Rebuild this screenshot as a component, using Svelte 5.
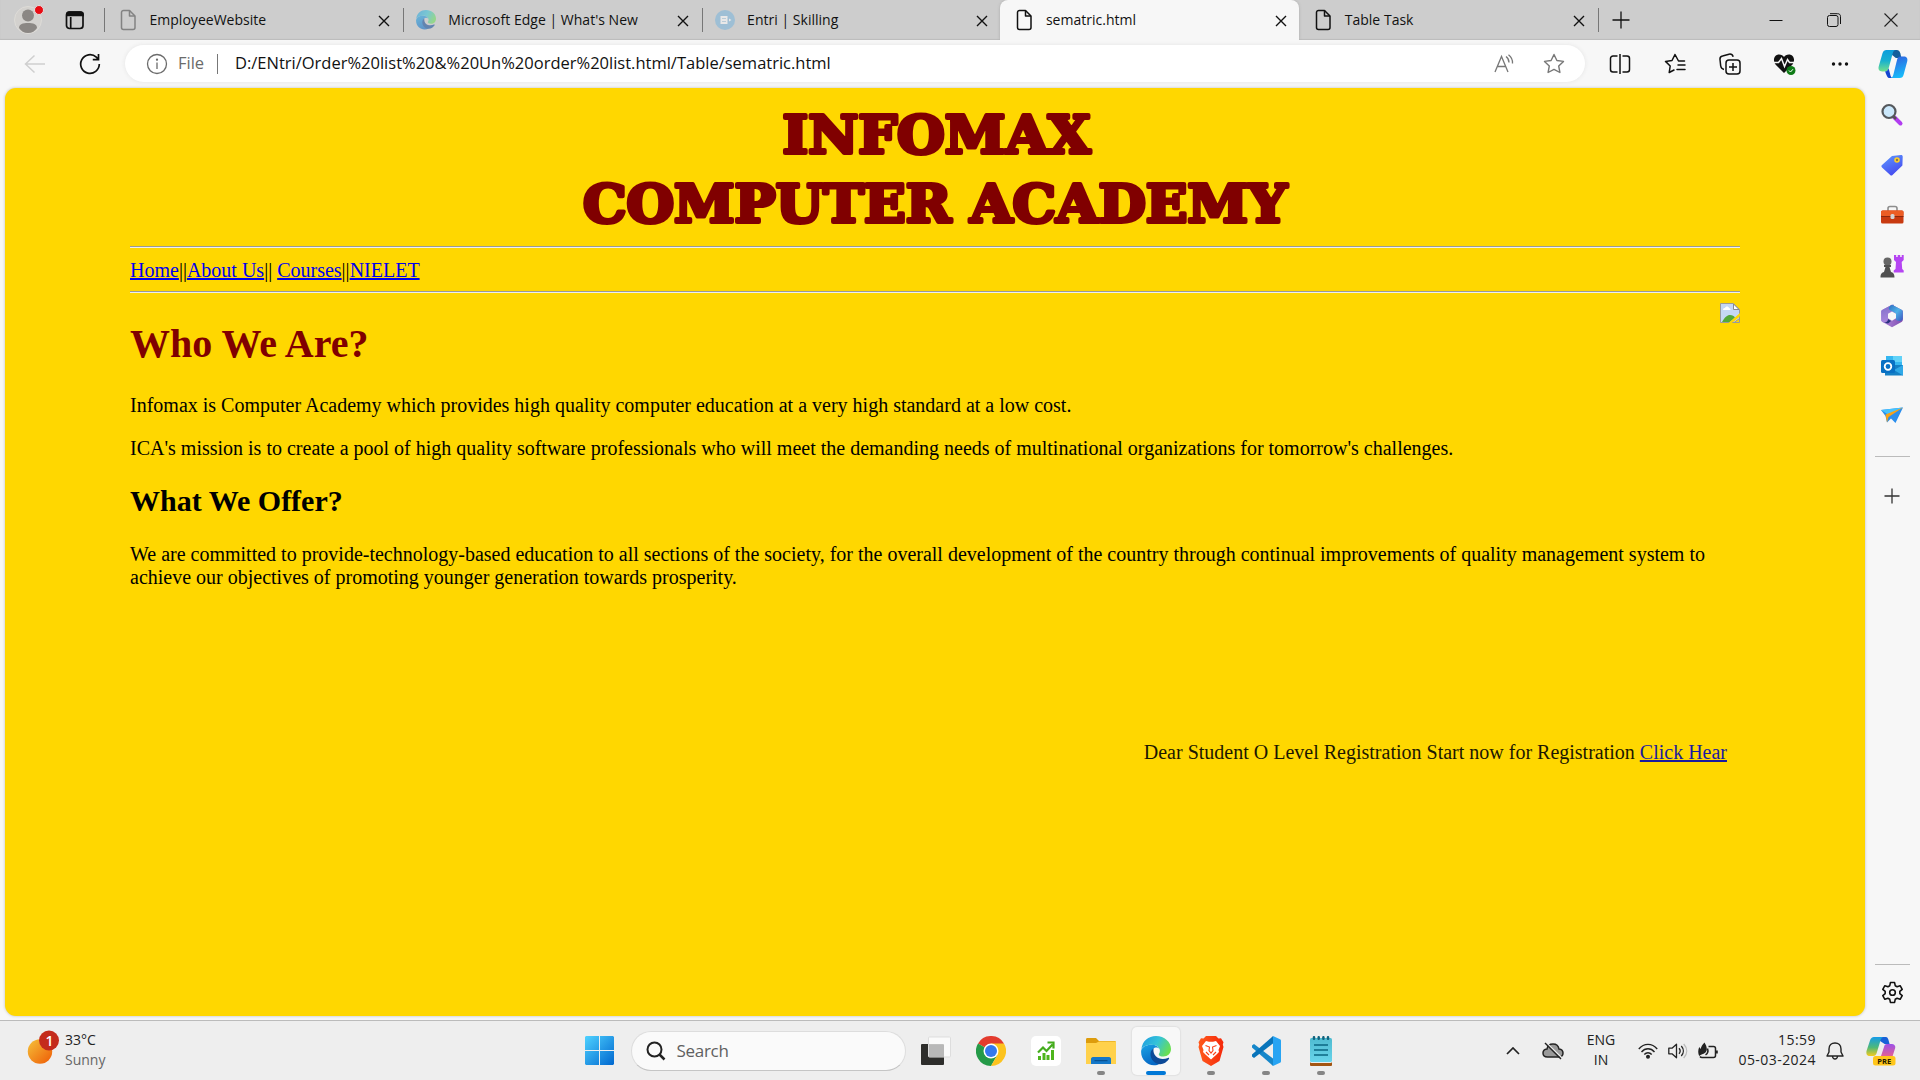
<script>
  const tabs = [
    { title: 'EmployeeWebsite', icon: 'doc', muted: true },
    { title: "Microsoft Edge | What's New", icon: 'edge', muted: true },
    { title: 'Entri | Skilling', icon: 'entri', muted: true },
    { title: 'sematric.html', icon: 'doc', active: true },
    { title: 'Table Task', icon: 'doc' }
  ];
  const sidebar = ['search', 'tag', 'toolbox', 'chess', 'm365', 'outlook', 'plane'];
  const apps = [
    { icon: 'taskview' },
    { icon: 'chrome' },
    { icon: 'stock' },
    { icon: 'folder', open: true },
    { icon: 'edge', open: true, current: true },
    { icon: 'brave', open: true },
    { icon: 'vscode', open: true },
    { icon: 'notepad', open: true }
  ];
</script>

{#snippet edgeLogo(size)}
  <svg width={size} height={size} viewBox="0 0 30 30">
    <defs>
      <linearGradient id="edgeTop" x1="0" y1="0.2" x2="1" y2="0.6">
        <stop offset="0" stop-color="#1f9fe0" /><stop offset="0.5" stop-color="#35c3d8" /><stop offset="1" stop-color="#6be04e" />
      </linearGradient>
      <linearGradient id="edgeLeft" x1="0" y1="0" x2="0.4" y2="1">
        <stop offset="0" stop-color="#1aa3e4" /><stop offset="1" stop-color="#0669c6" />
      </linearGradient>
    </defs>
    <path d="M0.4 13C1.400 5 7.500 0 15 0c8.500 0 15 6 15 13 0 4.500-3.300 7.500-7.600 7.500-3 0-4.600-1-4.600-2.100 0-.9 1.100-1.400 1.100-3.700 0-3.200-3.300-6-8.200-6C5.700 8.700 2 10.500.4 13z" fill="url(#edgeTop)" />
    <path d="M0.200 14.500C1 10.800 5.500 8.500 10.700 8.700c4 .1 6.600 1.900 7.600 3.900-1.500-1.300-4.400-1.700-6 .3-3.500 4.200-.4 12.500 7 14.500C10 33-1 25 .2 14.500z" fill="url(#edgeLeft)" />
    <path d="M12.500 12.600C8 15 8.300 23.500 15 27.300c5.500 2.500 10.500-.6 12.900-4.300.6-1-.2-1.500-1-1.100-6.500 3.100-15.500-.1-14.400-9.300z" fill="#0c4a98" />
  </svg>
{/snippet}

{#snippet docIcon(color)}
  <svg width="17" height="22" viewBox="0 0 17 22" fill="none" stroke={color} stroke-width="1.500" stroke-linejoin="round">
    <path d="M3.500 1.500h6l5.500 5.500v11.500a2 2 0 0 1-2 2h-9.500a2 2 0 0 1-2-2V3.500a2 2 0 0 1 2-2z" /><path d="M9.500 1.500V7H15" />
  </svg>
{/snippet}

{#snippet copilot(size)}
  <svg width={size} height={size} viewBox="0 0 32 32">
    <defs>
      <linearGradient id="cpA" x1="0" y1="0" x2="0" y2="1"><stop offset="0" stop-color="#0b9ddc" /><stop offset="0.5" stop-color="#18b0d0" /><stop offset="1" stop-color="#72e08c" /></linearGradient>
      <linearGradient id="cpB" x1="0.300" y1="0" x2="0.600" y2="1"><stop offset="0" stop-color="#2f62e0" /><stop offset="1" stop-color="#16c0fb" /></linearGradient>
    </defs>
    <path d="M8.500 1H20c2.300 0 3.200 1.500 3.800 3.500L25 9.500h-6z" fill="#135f9c" />
    <path d="M9 1h10c-2 0-2.700 1.500-3.300 3.500L11.500 20c-.7 2.500-1.500 4-3.700 4H4.500C1 24 0 21.500.8 18.500L4.800 4.500C5.600 2 7 1 9 1z" fill="url(#cpA)" />
    <path d="M7.500 24c2.200 0 3.200-1.500 3.800-3.500L13 27c.5 2.500 1.200 4 3 4h-3.500c-3 0-3.500-4-5-7z" fill="#1446d0" />
    <path d="M27.500 8H24c-2 0-3 1.200-3.600 3.200L16.500 27c-.6 2.500-1.400 4-3.400 4H23c2.500 0 3.700-1.200 4.300-3.500L31.200 13c.8-3-.8-5-3.700-5z" fill="url(#cpB)" />
  </svg>
{/snippet}

<div class="screen">
  <header class="tabbar">
    <div class="profile">
      <svg width="34" height="36" viewBox="0 0 34 36">
        <circle cx="15" cy="19" r="13.500" fill="#d3d1ce" stroke="#dedcd8" />
        <circle cx="15" cy="14.500" r="6" fill="#8b8784" />
        <path d="M6 27c0-4 4-5 9-5s9 1 9 5c-2 3-5 5-9 5s-7-2-9-5z" fill="#8b8784" />
        <circle cx="26" cy="9" r="4.500" fill="#e80c14" stroke="#e4dede" />
      </svg>
    </div>
    <div class="workspace">
      <svg width="20" height="20" viewBox="0 0 20 20" fill="none" stroke="#111" stroke-width="1.700"><rect x="1.500" y="2" width="16.500" height="16.500" rx="3" /><path d="M2 5.500V4c0-1.500 1-2 2-2h11.500c1.500 0 2.500.5 2.500 2v1.500z" fill="#111" /><path d="M5.700 7v11" /></svg>
    </div>
    {#each tabs as tab}
      <div class="tab" class:active={tab.active}>
        <span class="favicon" class:faded={tab.muted} class:logo={tab.icon !== 'doc'}>
          {#if tab.icon === 'doc'}
            {@render docIcon(tab.muted ? '#555' : '#111')}
          {:else if tab.icon === 'edge'}
            {@render edgeLogo(20)}
          {:else}
            <svg width="20" height="20" viewBox="0 0 20 20"><circle cx="10" cy="10" r="10" fill="#78b4dc" /><path d="M5.500 6h7v8h-7z" fill="#fff" /><path d="M7 8.500h4M7 11.500h4" stroke="#a8cbe0" /><path d="M14 8.500l2.500 1.500-2.500 1.500z" fill="#fff" /></svg>
          {/if}
        </span>
        <span class="title">{tab.title}</span>
        <svg class="close" width="12" height="12" viewBox="0 0 12 12" stroke="#111" stroke-width="1.400"><path d="M1 1l10 10M11 1L1 11" /></svg>
      </div>
    {/each}
    <div class="newtab"><svg width="18" height="18" viewBox="0 0 18 18" stroke="#111" stroke-width="1.300"><path d="M9 .5v17M.5 9h17" /></svg></div>
    <div class="window-buttons">
      <svg width="14" height="14" viewBox="0 0 14 14" stroke="#111"><path d="M.5 7.500h13" /></svg>
      <svg width="14" height="14" viewBox="0 0 14 14" fill="none" stroke="#111"><rect x=".5" y="2.500" width="10.500" height="11" rx="2" /><path d="M3 .7h7.500c2 0 3 1 3 3V11" /></svg>
      <svg width="14" height="14" viewBox="0 0 14 14" stroke="#222" stroke-width="1.100"><path d="M.5.5l13 13M13.500.5l-13 13" /></svg>
    </div>
  </header>

  <div class="toolbar">
    <div class="tool"><svg width="22" height="20" viewBox="0 0 22 20" fill="none" stroke="#cfcfcf" stroke-width="1.500"><path d="M21 10H1.500M10.500 1.500L1.500 10l9 8.500" /></svg></div>
    <div class="tool"><svg width="22" height="22" viewBox="0 0 22 22" fill="none" stroke="#111" stroke-width="1.700"><path d="M20.300 11a9.300 9.300 0 1 1-3-6.800L19.500 6.500M19.500 1v5.700h-5.700" /></svg></div>
    <div class="address">
      <svg class="info" width="22" height="22" viewBox="0 0 22 22" fill="none" stroke="#6b6b6b" stroke-width="1.300"><circle cx="11" cy="11" r="9.500" /><path d="M11 9.500V16" /><circle cx="11" cy="6.700" r=".5" fill="#6b6b6b" /></svg>
      <span class="scheme">File</span>
      <span class="divider"></span>
      <span class="url">D:/ENtri/Order%20list%20&amp;%20Un%20order%20list.html/Table/sematric.html</span>
      <svg class="read" width="22" height="20" viewBox="0 0 22 20" fill="none" stroke="#777" stroke-width="1.300"><path d="M1 18L7.500 2.500 14 18M3.500 12.500h8M12 2.500c2 1.500 3 3.500 3 6M14.500.7c3 2.300 4.300 5.300 4 8.800" /></svg>
      <svg class="star" width="22" height="22" viewBox="0 0 22 22" fill="none" stroke="#777" stroke-width="1.400" stroke-linejoin="round"><path d="M11 1.500l2.900 6 6.600.9-4.800 4.600 1.200 6.500-5.900-3.100-5.900 3.100L6.300 13 1.500 8.400l6.600-.9z" /></svg>
    </div>
    <div class="actions">
      <div class="tool"><svg width="22" height="22" viewBox="0 0 22 22" fill="none" stroke="#111" stroke-width="1.500"><path d="M8.500 3H4a2.500 2.500 0 0 0-2.500 2.500v11A2.500 2.500 0 0 0 4 19h4.500M13.500 3H18a2.500 2.500 0 0 1 2.500 2.500v11A2.500 2.500 0 0 1 18 19h-4.500M11 1v20" /></svg></div>
      <div class="tool"><svg width="22" height="22" viewBox="0 0 22 22" fill="none" stroke="#111" stroke-width="1.500" stroke-linejoin="round" stroke-linecap="round"><path d="M20 8h-5.500L11 1.500 8 7.500l-6.500.9L6.200 13l-1 6.500L10 17M14 12h7M13 16.500h8M15 8h5.500" /></svg></div>
      <div class="tool"><svg width="22" height="22" viewBox="0 0 22 22" fill="none" stroke="#111" stroke-width="1.500" stroke-linejoin="round"><rect x="7" y="7" width="14" height="14" rx="3" /><path d="M14 10v8M10 14h8M5 16.500c-2-.5-3-1.500-3.300-3.500L1 6.500c-.2-2 .7-3.200 2.500-3.600L10 1.200c2-.4 3.500.5 4.200 2.500" /></svg></div>
      <div class="tool"><svg width="24" height="24" viewBox="0 0 24 24"><path d="M11 21L2.500 12.500C-1 7 2 2.500 6 2.500c2.500 0 4 1 5 2.500 1-1.500 2.500-2.500 5-2.500 4 0 7 4.500 3.500 10z" fill="#111" /><path d="M1 10.500h4.500l3-4 3 8 3-7 2 3H21" fill="none" stroke="#f7f7f7" stroke-width="1.500" /><circle cx="18" cy="18.500" r="4.500" fill="#0f7b16" /><path d="M16 18.500l1.500 1.500 2.500-2.800" fill="none" stroke="#fff" /></svg></div>
      <div class="tool"><svg width="18" height="6" viewBox="0 0 18 6" fill="#111"><circle cx="2.500" cy="3" r="1.700" /><circle cx="9" cy="3" r="1.700" /><circle cx="15.500" cy="3" r="1.700" /></svg></div>
      <div class="tool last">{@render copilot(30)}</div>
    </div>
  </div>

  <div class="body">
    <main class="page">
      <div class="content">
        <h1 class="banner">
          <svg width="740" height="150" viewBox="0 0 740 150">
            <text x="217.500" y="57" textLength="308" lengthAdjust="spacingAndGlyphs">INFOMAX</text>
            <text x="18" y="126" textLength="704" lengthAdjust="spacingAndGlyphs">COMPUTER ACADEMY</text>
          </svg>
        </h1>
        <hr />
        <nav><a href="#home">Home</a>||<a href="#about">About Us</a>|| <a href="#courses">Courses</a>||<a href="#nielet">NIELET</a></nav>
        <hr />
        <div class="intro">
          <h2 class="who">Who We Are?</h2>
          <svg class="broken" width="20" height="20" viewBox="0 0 20 20">
            <path d="M.5.5h13l6 6v9L14 19.500H.5z" fill="#c6d8f5" stroke="#9a9a9a" />
            <path d="M13.500 1v5.500H19z" fill="#fff" stroke="#8a8a8a" />
            <path d="M3 7c0-2 1.500-2 2-2 .5-2 3.500-2 4 0 1 0 1.500 1 1.500 2z" fill="#fff" />
            <path d="M2 19c3-5 5-7 8-7 2.500 0 4 1 5 2.500L10 19z" fill="#54a838" />
            <path d="M20 10L8.500 20H12l8-6.500z" fill="#ffd700" />
            <path d="M12.500 19.500h7v-6" fill="none" stroke="#9a9a9a" />
          </svg>
        </div>
        <p>Infomax is Computer Academy which provides high quality computer education at a very high standard at a low cost.</p>
        <p>ICA's mission is to create a pool of high quality software professionals who will meet the demanding needs of multinational organizations for tomorrow's challenges.</p>
        <h3>What We Offer?</h3>
        <p>We are committed to provide-technology-based education to all sections of the society, for the overall development of the country through continual improvements of quality management system to achieve our objectives of promoting younger generation towards prosperity.</p>
        <div class="notice">Dear Student O Level Registration Start now for Registration <a href="#register">Click Hear</a></div>
      </div>
    </main>

    <aside class="sidebar">
      {#each sidebar as item}
        <div class="side">
          <svg width="24" height="24" viewBox="0 0 24 24">
            {#if item === 'search'}
              <path d="M14 14l6.500 6.500" stroke="#b13df0" stroke-width="4" stroke-linecap="round" /><path d="M13 13l3 3" stroke="#555" stroke-width="2.500" />
              <circle cx="9" cy="8.500" r="6.500" fill="#cbe8fb" stroke="#55585c" stroke-width="2.200" />
            {:else if item === 'tag'}
              <defs><linearGradient id="tagG" x1="0" y1="0" x2=".5" y2="1"><stop offset="0" stop-color="#5e9bff" /><stop offset="1" stop-color="#464cf0" /></linearGradient></defs>
              <path d="M12 3l9-1c1.200 0 1.700.7 1.700 1.700l-.3 8.800L12.500 22c-.8.7-1.600.7-2.300 0L2 14.500c-.8-.8-.8-1.600 0-2.400z" fill="url(#tagG)" /><circle cx="17" cy="7" r="2" fill="#8a7a50" stroke="#ffcf29" stroke-width="1.600" />
            {:else if item === 'toolbox'}
              <path d="M8 8V5.500C8 4 9 3.500 10 3.500h5c1.500 0 2 .8 2 2V8" fill="none" stroke="#8d8d8d" stroke-width="1.600" />
              <rect x="1" y="7.500" width="22.500" height="13" rx="1.500" fill="#c83a10" /><rect x="1" y="7.500" width="22.500" height="5.500" rx="1.500" fill="#ec5d24" /><path d="M1 13.500h22.500" stroke="#8d280e" /><rect x="10.500" y="11" width="4" height="5" rx="1.500" fill="#d4d4d4" />
            {:else if item === 'chess'}
              <path d="M14 1h2.200v2h1.500V1h2.500v2h1.500V1h2v5l-2 2 .5 7 1.500 1.500v2h-10v-2L15.500 15 16 8l-2-2z" fill="#b545f2" />
              <circle cx="7.500" cy="7.500" r="4" fill="#666" /><path d="M4 11h7v2H9.500l1.500 5c2 .5 3.500 1.500 3.500 5.500H.5C.5 19.500 2 18.500 4 18l1.500-5H4z" fill="#505050" />
            {:else if item === 'm365'}
              <defs>
                <linearGradient id="mTop" x1="0" y1="0" x2="1" y2="1"><stop offset="0" stop-color="#2a6ec0" /><stop offset=".5" stop-color="#4fb2e8" /><stop offset="1" stop-color="#3a55c0" /></linearGradient>
                <linearGradient id="mLeft" x1="0" y1="0" x2=".3" y2="1"><stop offset="0" stop-color="#7d6ec8" /><stop offset="1" stop-color="#a986dc" /></linearGradient>
                <linearGradient id="mBase" x1="0" y1="0" x2="1" y2="0"><stop offset="0" stop-color="#b48be0" /><stop offset="1" stop-color="#7e4cae" /></linearGradient>
              </defs>
              <path d="M12 .8l9.500 5c.9.500 1.300 1 1.300 2v8c0 1-.4 1.600-1.300 2.100L12 23.300l-9.500-5.400c-.9-.5-1.300-1.100-1.300-2.100v-8c0-1 .4-1.500 1.300-2z" fill="url(#mBase)" />
              <path d="M12 .8L2.500 5.800c-.9.500-1.300 1-1.300 2v8c0 1 .4 1.600 1.300 2.100l1 .6L8 15.500V9.500L14 6V.8z" fill="url(#mLeft)" />
              <path d="M8 19.500l-4.500-1c2.700.5 4.500-1 4.500-3.500l3 2z" fill="#28337e" />
              <path d="M12 .8l9.500 5c.9.500 1.300 1 1.300 2v7c-.5 2.200-3 3-6.800 1.200V9.500l-5-2.800C7.800 5.500 8 3 12 .8z" fill="url(#mTop)" />
              <path d="M12 7.500l4 2.300v4.500L12 16.700l-4-2.400V9.800z" fill="#f7f7f7" />
            {:else if item === 'outlook'}
              <path d="M6 2h16v17H6z" fill="#35b7f1" /><path d="M13 2h9v6h-9z" fill="#61d2f8" /><path d="M5 11h18v10.500H5z" fill="#1580c5" /><path d="M14 16l9-5v10.500z" fill="#30a9e8" /><rect x="1" y="6" width="14" height="13" rx="1.500" fill="#0870c4" /><circle cx="8" cy="12.500" r="3.300" fill="none" stroke="#fff" stroke-width="1.800" />
            {:else}
              <path d="M1 6l22-2.500L15.500 19 11 14.500 7 18.500 5.500 12z" fill="#2a8eed" /><path d="M1 6l22-2.500-15 7z" fill="#45c3ff" /><path d="M5.500 10.500L23 3.500 8.500 13 7 18.500z" fill="#f7a218" />
            {/if}
          </svg>
        </div>
      {/each}
      <div class="rule"></div>
      <div class="side add"><svg width="16" height="16" viewBox="0 0 16 16" stroke="#333" stroke-width="1.300"><path d="M8 .5v15M.5 8h15" /></svg></div>
      <div class="rule bottom"></div>
      <div class="side gear"><svg width="23" height="23" viewBox="0 0 22 22" fill="none" stroke="#111" stroke-width="1.500" stroke-linejoin="round"><path d="M9 1.500h4l.6 3 1.800 1 2.900-1 2 3.500-2.300 2v2l2.300 2-2 3.500-2.900-1-1.800 1-.6 3H9l-.6-3-1.800-1-2.900 1-2-3.500 2.300-2v-2l-2.300-2 2-3.500 2.900 1 1.800-1z" /><circle cx="11" cy="11" r="2.700" /></svg></div>
    </aside>
  </div>

  <footer class="taskbar">
    <div class="weather">
      <svg width="34" height="36" viewBox="0 0 34 36">
        <defs><linearGradient id="sunG" x1="0" y1="0" x2="1" y2="1"><stop offset="0" stop-color="#f5c23a" /><stop offset="1" stop-color="#ee5a05" /></linearGradient></defs>
        <circle cx="13" cy="22.500" r="12.200" fill="url(#sunG)" /><circle cx="22" cy="11.500" r="10" fill="#c42b1c" /><text x="22.500" y="16.500" class="badge">1</text>
      </svg>
      <div class="stack"><span>33°C</span><span class="dim">Sunny</span></div>
    </div>
    <div class="start">
      <svg width="29" height="29" viewBox="0 0 29 29">
        <defs><linearGradient id="winG" gradientUnits="userSpaceOnUse" x1="0" y1="0" x2="29" y2="29"><stop offset="0" stop-color="#4fd2ff" /><stop offset="1" stop-color="#0067cf" /></linearGradient></defs>
        <path d="M1 0h13v14H0V1zM15 0h13l1 1v13H15zM0 15h14v14H1l-1-1zM15 15h14v13l-1 1H15z" fill="url(#winG)" />
      </svg>
    </div>
    <div class="search">
      <svg width="20" height="20" viewBox="0 0 20 20" fill="none" stroke="#222" stroke-width="2"><circle cx="8.500" cy="8.500" r="7" /><path d="M13.500 13.500l5 5" stroke-width="2.500" /></svg>
      <span>Search</span>
    </div>
    <div class="apps">
      {#each apps as app}
        <div class="app" class:current={app.current}>
          {#if app.icon === 'taskview'}
            <svg width="30" height="30" viewBox="0 0 30 30"><rect x="0" y="8" width="23" height="21" rx="1" fill="#2d2d2b" /><rect x="7.500" y="1" width="22" height="20" rx="1" fill="#fff" fill-opacity=".7" stroke="#ddd" /><path d="M8 9h15v12H8z" fill="#b8b8b8" /></svg>
          {:else if app.icon === 'chrome'}
            <svg width="30" height="30" viewBox="0 0 30 30"><path d="M15 15L2 7.500a15 15 0 0 1 26 0z" fill="#e33b2e" /><path d="M15 15L2 7.500A15 15 0 0 0 15 30l6.500-11.300z" fill="#249a48" /><path d="M15 7.500h13A15 15 0 0 1 15 30l6.500-11.300z" fill="#fcc31e" /><circle cx="15" cy="15" r="7.500" fill="#fff" /><circle cx="15" cy="15" r="6" fill="#3478ee" /></svg>
          {:else if app.icon === 'stock'}
            <svg width="30" height="30" viewBox="0 0 30 30"><rect width="30" height="30" rx="5" fill="#fff" /><path d="M8.500 24v-4M13 24v-7M17 24v-5M21.500 24V14" stroke="#4eb51d" stroke-width="3" /><path d="M7 16.500l5-5 3.500 3.500 6-6.500M16.500 6.500h6v6" fill="none" stroke="#43ac1c" stroke-width="2.200" /></svg>
          {:else if app.icon === 'folder'}
            <svg width="30" height="30" viewBox="0 0 30 30"><path d="M0 3.500C0 2.500.5 2 1.500 2H10l3 3h15.500c1 0 1.500.5 1.500 1.500V10H0z" fill="#dd9c0c" /><path d="M0 7h10l3-1.500h17V28H0z" fill="#ffd14b" /><path d="M5 28v-5c0-1 .7-2 2-2h16c1.300 0 2 1 2 2v5z" fill="#1477c8" /><path d="M8.500 24.700h13" stroke="#074984" /></svg>
          {:else if app.icon === 'edge'}
            {@render edgeLogo(30)}
          {:else if app.icon === 'brave'}
            <svg width="26" height="30" viewBox="0 0 26 30"><defs><linearGradient id="braveG"><stop offset="0" stop-color="#ff5a1c" /><stop offset="1" stop-color="#f5290b" /></linearGradient></defs><path d="M8 0h10l2.500 2.500L23 2.300l2.500 4-.7 2.200.7 2.500-4 14L13 30l-8.500-5-4-14 .7-2.500L.5 6.300 3 2.300l2.500.2z" fill="url(#braveG)" /><path d="M8 5l3 .8h4l3-.8 4 5-1.500 4 .5 2-3 3-5 4.500L8 19l-3-3 .5-2L4 10z" fill="#fff" /><path d="M7.500 9.500l4 1.500-.5 3.500 2 2.500 2-2.500-.5-3.500 4-1.500M8 16l3 3M18 16l-3 3" fill="none" stroke="#fa421a" stroke-width="1.100" /></svg>
          {:else if app.icon === 'vscode'}
            <svg width="30" height="30" viewBox="0 0 30 30"><path d="M1 9.500L3 8l19 14.500V30L1 11.500z" fill="#1687ca" /><path d="M1 20.500L3 22 22 7.500V0L1 18.500z" fill="#0874ba" /><path d="M22 0l7 3.200c.7.300 1 .8 1 1.500v20.600c0 .7-.3 1.200-1 1.500L22 30z" fill="#27a4f3" /></svg>
          {:else}
            <svg width="22" height="30" viewBox="0 0 22 30"><defs><linearGradient id="noteG" x1="0" y1="0" x2="0" y2="1"><stop offset="0" stop-color="#4fbbd0" /><stop offset="1" stop-color="#68d4eb" /></linearGradient></defs><rect y="24" width="22" height="6" rx="1" fill="#a35512" /><rect y="2" width="22" height="25" rx="1.500" fill="#e6eef0" /><rect y="2" width="22" height="24" rx="1.500" fill="url(#noteG)" /><path d="M4 1.200v1.500M8.700 1.200v1.500M13.400 1.200v1.500M18 1.200v1.500" stroke="#10637e" stroke-width="2.500" stroke-linecap="round" /><path d="M4 9h14M4 14h14M4 19h14" stroke="#0b6782" stroke-width="1.700" /></svg>
          {/if}
          {#if app.open}<span class="pill" class:wide={app.current}></span>{/if}
        </div>
      {/each}
    </div>
    <div class="tray">
      <svg class="chev" width="14" height="8" viewBox="0 0 14 8" fill="none" stroke="#222" stroke-width="1.700"><path d="M1 7l6-6 6 6" /></svg>
      <svg class="cloud" width="22" height="18" viewBox="0 0 22 18" fill="none" stroke="#222" stroke-width="1.500"><path d="M5.500 15C2.500 15 1 13.300 1 11s1.700-3.700 4-4c.5-3.300 3-5 6-5 3.200 0 5.500 2 6 5 2.500.3 4 1.800 4 4s-1.500 4-4.500 4z" fill="#999" /><path d="M4.500 1l16 15.500" stroke="#eee" stroke-width="1.500" /><path d="M3 1l16 16" /></svg>
      <div class="stack lang"><span>ENG</span><span>IN</span></div>
      <svg class="wifi" width="20" height="16" viewBox="0 0 20 16" fill="none" stroke="#222" stroke-width="1.400"><path d="M.8 6C6-.2 14-.2 19.200 6M3.500 9c3.700-4.300 9.300-4.300 13 0M6.300 11.500c2.100-2.400 5.300-2.400 7.400 0" /><circle cx="10" cy="13.700" r="1.300" fill="#222" /></svg>
      <svg class="sound" width="20" height="16" viewBox="0 0 20 16" fill="none" stroke="#222" stroke-width="1.300"><path d="M.8 5.200H4l4.500-4v13.600l-4.500-4H.8zM11 5.200c1.300 1.500 1.300 4 0 5.500M13.300 3c2.700 3 2.700 7 0 10" stroke-linejoin="round" /><path d="M15.700 1c4 4.300 4 9.700 0 14" stroke="#bbb" /></svg>
      <svg class="battery" width="20" height="18" viewBox="0 0 20 18" fill="none" stroke="#222" stroke-width="1.500"><path d="M10.500 4.500h5c1.500 0 2 .7 2 2v7c0 1.300-.7 2-2 2H4c-1 0-1.500-.3-2-1" /><path d="M18.800 8.500v3" stroke-width="2" /><path d="M6.500.5c2.500 4 3.500 8 .3 10.500C5.500 12.500 3 12 1.200 14 0 11.500-.2 8.500 1.200 5l1.500 2C3.200 4.500 4.500 2.500 6.500.5z" fill="#222" stroke="none" /><path d="M9.500 6.500c1 3 .3 5-2 6.300" /></svg>
      <div class="stack clock"><span>15:59</span><span>05-03-2024</span></div>
      <svg class="bell" width="18" height="18" viewBox="0 0 18 18" fill="none" stroke="#222" stroke-width="1.400" stroke-linejoin="round"><path d="M3 10V7c0-3.700 2.500-6 6-6s6 2.300 6 6v3l2 4H1zM6.500 14.500c.5 3.300 4.500 3.300 5 0" /></svg>
      <svg class="copilot" width="30" height="30" viewBox="0 0 30 30">
        <defs>
          <linearGradient id="pcA" x1="0" y1="0" x2="0" y2="1"><stop offset="0" stop-color="#149be8" /><stop offset=".55" stop-color="#4fb978" /><stop offset="1" stop-color="#f5cb1c" /></linearGradient>
          <linearGradient id="pcB" x1="0" y1="0" x2="0" y2="1"><stop offset="0" stop-color="#9c50e8" /><stop offset="1" stop-color="#f8667a" /></linearGradient>
        </defs>
        <path d="M8 1h12c2 0 2.600 3 3.600 7h-5z" fill="#1760d8" /><path d="M8 1h9c-2 1-2.500 3-3 5l-3.300 11c-.7 2-1.500 3-3.500 3H4c-3 0-4-2-3.500-5L4 4.500C4.700 2.200 6 1 8 1z" fill="url(#pcA)" /><path d="M25 8h-4c-2 0-2.500 1-3 3l-3 9-4 4h12c2 0 3-1.500 3.500-3.500L29.200 12C29.700 9.500 28 8 25 8z" fill="url(#pcB)" />
        <rect x="7" y="20" width="22.500" height="9.500" rx="2.500" fill="#ffc61a" /><text x="18.300" y="27.700" class="pre">PRE</text>
      </svg>
    </div>
  </footer>
</div>

<style>
  :global(body) { margin: 0; background: #f7f7f7; overflow: hidden; }
  .screen { width: 1920px; height: 1080px; display: flex; flex-direction: column; background: #f7f7f7; font-family: "Open Sans", "Noto Sans", sans-serif; color: #111; overflow: hidden; }
  svg { display: block; flex: none; }

  .tabbar { height: 40px; flex: none; display: flex; background: #cdcdcd; box-shadow: inset 0 -1px 1px #bcbcbc; }
  .profile { width: 61px; padding-left: 13px; padding-top: 1px; box-sizing: border-box; }
  .workspace { width: 43px; padding: 10px 0 0 4px; box-sizing: border-box; }
  .tab { width: 298.800px; height: 40px; box-sizing: border-box; display: flex; align-items: center; padding: 0 12.500px 0 15.500px; background: linear-gradient(#777, #777) 0 50% / 1px 24px no-repeat; }
  .tab.active { background: #f7f7f7; border-radius: 8px 8px 0 0; box-shadow: 0 0 3px #aaa; clip-path: inset(0 -4px 0 -4px); }
  .tab.active + .tab { background: none; }
  .favicon { width: 20px; margin-right: 10px; }
  .favicon.faded { opacity: .62; }
  .favicon.logo { margin-left: -2.500px; margin-right: 12.500px; opacity: .55; }
  .title { flex: 1; font-size: 14px; letter-spacing: .02px; white-space: nowrap; line-height: 38px; padding-bottom: 1px; }
  .close { margin-top: 1px; }
  .newtab { display: flex; align-items: center; padding-left: 14px; background: linear-gradient(#777, #777) 0 50% / 1px 24px no-repeat; }
  .newtab svg { margin-bottom: 1px; }
  .window-buttons { margin-left: auto; display: flex; align-items: center; gap: 43.500px; padding-right: 22px; }

  .toolbar { height: 48px; flex: none; box-sizing: border-box; display: flex; align-items: center; padding: 0 0 1px 7px; }
  .tool { width: 55.200px; display: flex; justify-content: center; }
  .tool.last { width: 51px; }
  .actions { display: flex; align-items: center; margin-left: 7px; }
  .address { width: 1460px; height: 37px; box-sizing: border-box; margin-left: 7.600px; border-radius: 19px; background: #fff; box-shadow: 0 0 4px #e4e4e4; display: flex; align-items: center; padding: 0 20px 0 21px; font-size: 16.500px; line-height: 22px; }
  .scheme { color: #6b6b6b; width: 39px; margin: 0 0 2px 10px; }
  .divider { width: 1px; height: 20px; background: #777; margin-right: 17px; }
  .url { flex: 1; letter-spacing: 0; white-space: nowrap; margin-bottom: 2px; }
  .read { margin-right: -1px; }
  .star { margin-left: 28px; }

  .body { height: 932px; flex: none; display: flex; padding-left: 5px; box-sizing: border-box; }
  .page { width: 1860px; height: 928px; border-radius: 11px; background: #ffd700; box-shadow: 0 0 3px #bbb; overflow: hidden; font-family: "Liberation Serif", serif; color: #000; font-size: 20px; line-height: 23px; }
  .content { margin: 0 125px; }
  .banner { margin: 0; padding-top: 8px; height: 150px; display: flex; justify-content: center; }
  .banner text { font-family: "DejaVu Serif", serif; font-weight: 700; font-size: 52px; fill: maroon; stroke: maroon; stroke-width: 4px; stroke-linejoin: round; }
  hr { margin: 0; height: 2px; border: 0; background: linear-gradient(#9a9a9a 50%, #eee 50%); }
  nav { padding: 10.500px 0 9.500px; }
  a { color: #0000ee; text-decoration: underline; }
  .intro { display: flex; justify-content: space-between; padding-top: 10px; }
  .who { margin: 18px 0 27px; font-size: 40px; line-height: 46px; color: maroon; }
  p { margin: 0 0 20px; }
  h3 { margin: 24px 0 25px; font-size: 30px; line-height: 34px; }
  .notice { margin-top: 152px; padding-right: 13px; text-align: right; color: #1c1700; }
  .notice a { color: #1a1a9f; }

  .sidebar { width: 54px; display: flex; flex-direction: column; align-items: center; padding-top: 2px; box-sizing: border-box; }
  .side { height: 50.200px; display: flex; align-items: center; justify-content: center; }
  .rule { width: 35px; height: 1px; background: #bbb; margin-top: 14.500px; flex: none; }
  .add { height: 78px; }
  .rule.bottom { margin-top: auto; }
  .gear { height: 55px; }

  .taskbar { height: 60px; flex: none; box-sizing: border-box; border-top: 1px solid #bbb; background: #eee; display: flex; align-items: center; font-size: 14px; color: #222; }
  .weather { width: 575px; height: 59px; display: flex; align-items: center; padding-left: 27px; box-sizing: border-box; }
  .weather > svg { margin-bottom: 8px; }
  .weather .stack { margin-left: 4px; }
  .badge { fill: #fff; font-size: 14px; font-weight: 600; text-anchor: middle; }
  .stack { display: flex; flex-direction: column; line-height: 20px; padding-bottom: 2px; }
  .dim { color: #666; }
  .start { padding: 0 17px 0 10px; }
  .search { width: 275px; height: 40px; box-sizing: border-box; border: 1px solid #ddd; border-bottom-color: #c5c5c5; border-radius: 20px; background: #fafafa; display: flex; align-items: center; padding-left: 13.500px; gap: 11px; font-size: 17px; letter-spacing: -.3px; color: #606060; }
  .apps { display: flex; gap: 7px; margin-left: 6px; }
  .app { width: 48px; height: 48px; box-sizing: border-box; position: relative; display: flex; align-items: center; justify-content: center; border-radius: 5px; }
  .app.current { background: #f8f8f8; box-shadow: 0 0 1px 1px #e1e1e1; }
  .pill { position: absolute; left: 20px; bottom: 0; width: 8px; height: 4px; border-radius: 2px; background: #858585; }
  .pill.wide { left: 14px; width: 20px; background: #0078d7; }
  .tray { margin-left: auto; display: flex; align-items: center; padding-right: 24px; }
  .cloud { margin-left: 22px; }
  .lang { width: 54px; margin-left: 10px; align-items: center; }
  .wifi { margin-left: 10px; }
  .sound { margin-left: 10px; }
  .battery { margin-left: 10px; }
  .clock { width: 98px; align-items: flex-end; letter-spacing: .45px; }
  .bell { margin-left: 10px; }
  .copilot { margin-left: 22px; }
  .pre { font-size: 7.500px; font-weight: 700; text-anchor: middle; fill: #221b00; }
</style>
